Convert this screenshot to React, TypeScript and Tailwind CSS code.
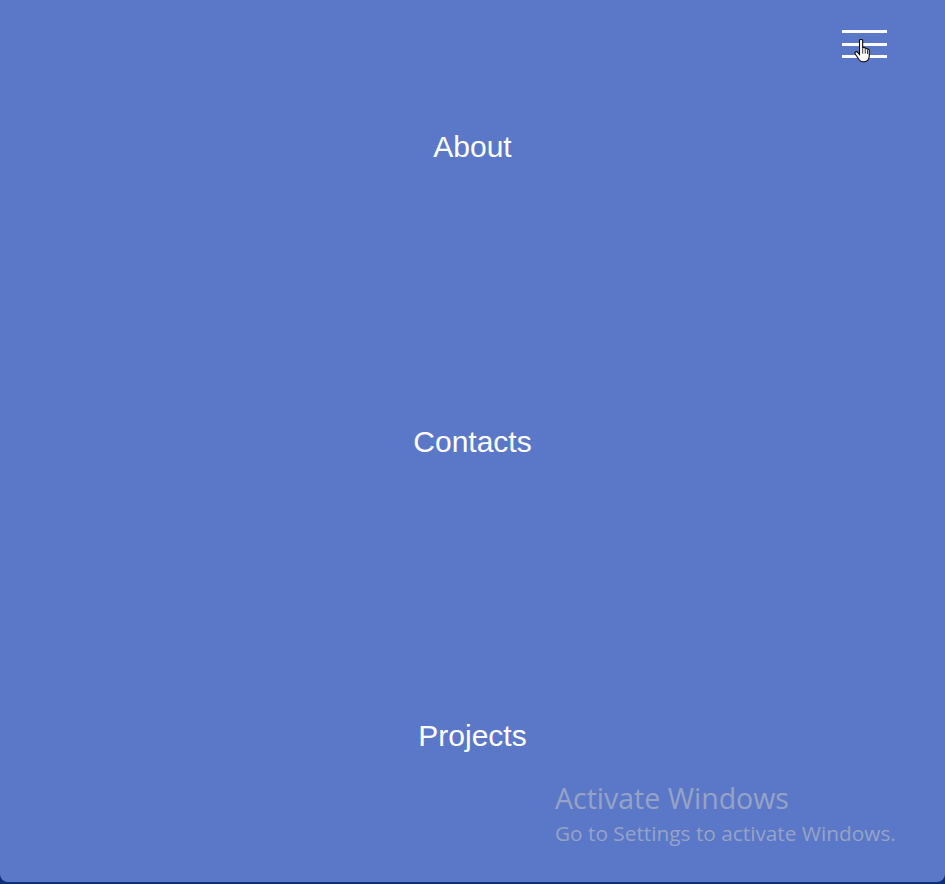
import React from "react";

const links = ["About", "Contacts", "Projects"];

const HandCursor = () => (
  <svg width="19" height="24" viewBox="0 0 14 18" className="absolute left-[12px] top-[9px]">
    <path
      d="M4 1.5c0-.8.5-1.3 1.2-1.3S6.4.7 6.4 1.5V7l.3-.6c.7-.3 1.4 0 1.6.6.6-.3 1.3 0 1.5.6.6-.2 1.300.1 1.5.8V13c0 2-1.4 4-3.5 4H6.3c-1.2 0-2-.6-2.7-1.6L.8 11.2c-.4-.6-.2-1.3.4-1.6.5-.3 1.1-.1 1.5.4L4 11.6z"
      fill="#fff"
      stroke="#000"
      strokeWidth="0.8"
    />
    <path d="M6.4 7v4M8.3 7.5v3.5M10 8.3v3" stroke="#000" strokeWidth="0.6" />
  </svg>
);

export default function App() {
  return (
    <div className="relative h-[884px] w-full bg-[#0d2f78]">
      <nav className="grid h-[882px] grid-rows-[294px_296px_292px] rounded-b-lg bg-[#5b78c8] font-['Liberation_Sans',Arial,sans-serif]">
        {links.map((label) => (
          <a
            key={label}
            href="#"
            className="flex items-center justify-center text-[30px] leading-none text-white"
          >
            {label}
          </a>
        ))}
      </nav>

      {/* burger toggle */}
      <button className="absolute left-[842px] top-[30px] flex w-[45px] flex-col gap-[9.5px]">
        <span className="block h-[3px] w-full bg-white" />
        <span className="block h-[3px] w-full bg-white" />
        <span className="block h-[3px] w-full bg-white" />
        <HandCursor />
      </button>

      {/* windows watermark */}
      <div className="pointer-events-none absolute left-[555px] top-[780px] font-['Open_Sans','Noto_Sans',sans-serif] text-[#97a3c6]">
        <div className="text-[28.5px] leading-[36px]">Activate Windows</div>
        <div className="mt-[3px] text-[20.8px] leading-[28px]">Go to Settings to activate Windows.</div>
      </div>
    </div>
  );
}
